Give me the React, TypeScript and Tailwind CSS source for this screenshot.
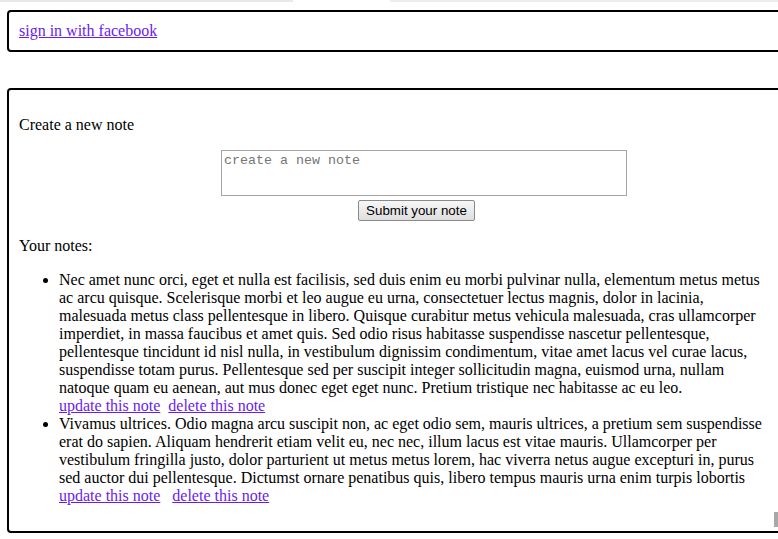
import React from 'react';

const notes = [
  {
    id: 1,
    text: 'Nec amet nunc orci, eget et nulla est facilisis, sed duis enim eu morbi pulvinar nulla, elementum metus metus ac arcu quisque. Scelerisque morbi et leo augue eu urna, consectetuer lectus magnis, dolor in lacinia, malesuada metus class pellentesque in libero. Quisque curabitur metus vehicula malesuada, cras ullamcorper imperdiet, in massa faucibus et amet quis. Sed odio risus habitasse suspendisse nascetur pellentesque, pellentesque tincidunt id nisl nulla, in vestibulum dignissim condimentum, vitae amet lacus vel curae lacus, suspendisse totam purus. Pellentesque sed per suscipit integer sollicitudin magna, euismod urna, nullam natoque quam eu aenean, aut mus donec eget eget nunc. Pretium tristique nec habitasse ac eu leo.',
    gap: 'ml-1',
  },
  {
    id: 2,
    text: 'Vivamus ultrices. Odio magna arcu suscipit non, ac eget odio sem, mauris ultrices, a pretium sem suspendisse erat do sapien. Aliquam hendrerit etiam velit eu, nec nec, illum lacus est vitae mauris. Ullamcorper per vestibulum fringilla justo, dolor parturient ut metus metus lorem, hac viverra netus augue excepturi in, purus sed auctor dui pellentesque. Dictumst ornare penatibus quis, libero tempus mauris urna enim turpis lobortis',
    gap: 'ml-2',
  },
];

export default function App() {
  return (
    <div className="relative h-screen overflow-hidden bg-white font-['Liberation_Serif',serif] text-[16px] leading-[18px] text-black">
      <div className="flex h-[2px]">
        <div className="w-[293px] bg-[#e8e8e8]" />
        <div className="w-[97px]" />
        <div className="flex-1 bg-[#ececec]" />
      </div>

      <div className="ml-[7px] mt-2 w-[775px] rounded-[4px] border-2 border-black p-[10px]">
        <a href="#" className="text-[#6a1bf0] underline">
          sign in with facebook
        </a>
      </div>

      <div className="ml-[7px] mt-[36px] w-[775px] rounded-[4px] border-2 border-black p-[10px]">
        <p className="my-4">Create a new note</p>
        <div className="flex flex-col items-start">
          <textarea
            placeholder="create a new note"
            className="ml-[202px] h-[46px] w-[406px] resize-none border border-[#a6a6a6] p-[2px] font-['Liberation_Mono',monospace] text-[13.33px] leading-[15px] placeholder:text-[#757575]"
          />
          <button className="ml-[339px] mt-1 h-[21px] w-[117px] rounded-[2px] border border-[#8a8a8a] bg-gradient-to-b from-[#f7f7f7] to-[#dedede] font-['Liberation_Sans',sans-serif] text-[13.33px] leading-[15px] text-black">
            Submit your note
          </button>
        </div>
        <p className="my-4">Your notes:</p>
        <ul className="my-4 list-disc pl-10">
          {notes.map((note) => (
            <li key={note.id}>
              {note.text}
              <br />
              <a href="#" className="text-[#6a1bf0] underline">
                update this note
              </a>{' '}
              <a href="#" className={`${note.gap} text-[#6a1bf0] underline`}>
                delete this note
              </a>
            </li>
          ))}
        </ul>
      </div>

      <div className="absolute right-0 top-[512px] h-[15px] w-[4px] bg-[#a8a8a8]" />
    </div>
  );
}
